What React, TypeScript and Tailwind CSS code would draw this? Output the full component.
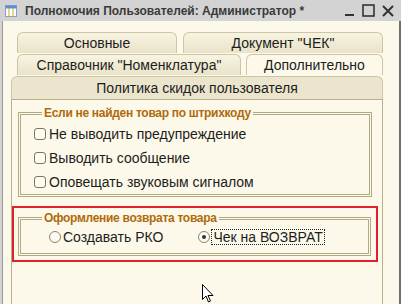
import React from 'react';

const font = { fontFamily: '"Liberation Sans", Arial, sans-serif' };

function Tab({ label, className = '' }: { label: string; className?: string }) {
  return (
    <div
      className={`h-[21px] flex items-center justify-center rounded-t-[6px] border border-b-0 border-[#cdc5a3] bg-gradient-to-b from-[#f8f4e2] to-[#e9e3c9] text-[14px] text-[#1d1d1d] ${className}`}
    >
      {label}
    </div>
  );
}

function CheckRow({ label }: { label: string }) {
  return (
    <div className="flex items-center h-[24px]">
      <div className="w-[12px] h-[12px] rounded-[3px] border border-[#7d775e] bg-[#fdfbf1]" />
      <span className="ml-[3px] text-[14px] text-[#1d1d1d]">{label}</span>
    </div>
  );
}

function Group({ title, children, className = '' }: { title: string; children: React.ReactNode; className?: string }) {
  return (
    <fieldset className={`border-[3px] border-double border-[#b2aa84] px-[13px] ${className}`}>
      <legend className="ml-[8px] px-[2px] text-[12px] font-bold text-[#b06a0c] tracking-[-0.3px]">{title}</legend>
      {children}
    </fieldset>
  );
}

export default function App() {
  return (
    <div className="w-[401px] h-[304px] overflow-hidden relative bg-[#d3d3d3]" style={font}>
      {/* title bar */}
      <div className="h-[21px] flex items-center px-[5px]">
        <svg width="12" height="12" viewBox="0 0 12 12" className="shrink-0">
          <rect x="0.5" y="0.5" width="11" height="11" fill="#fff" stroke="#8aa1c4" />
          <rect x="0.5" y="0.5" width="11" height="3" fill="#5b8fd6" />
          <line x1="4" y1="3" x2="4" y2="12" stroke="#c8a93a" />
          <line x1="8" y1="3" x2="8" y2="12" stroke="#c8a93a" />
        </svg>
        <span className="ml-[8px] text-[12px] font-bold text-[#3a3a3a]">Полномочия Пользователей: Администратор *</span>
        <div className="ml-auto flex items-center gap-[7px] pr-[2px] text-[#333]">
          <svg width="10" height="12" viewBox="0 0 10 12">
            <rect x="0" y="9" width="9" height="2" fill="#333" />
          </svg>
          <svg width="13" height="13" viewBox="0 0 13 13">
            <rect x="1" y="1" width="11" height="11" fill="none" stroke="#333" strokeWidth="1.6" />
          </svg>
          <svg width="12" height="12" viewBox="0 0 12 12">
            <path d="M1 1 L11 11 M11 1 L1 11" stroke="#333" strokeWidth="2" />
          </svg>
        </div>
      </div>

      {/* window body */}
      <div className="h-[283px] ml-[2px] mr-[2px] border-l border-[#9a9a9a] bg-[#fcf9ea] pl-[8px] pr-[16px] pt-[11px]">
        <div className="flex flex-col">
          <div className="flex gap-[6px] pl-[6px]">
            <Tab label="Основные" className="w-[160px]" />
            <Tab label={'Документ "ЧЕК"'} className="flex-1" />
          </div>
          <div className="flex gap-[5px] pl-[6px] mt-[1px]">
            <Tab label={'Справочник "Номенклатура"'} className="w-[224px]" />
            <Tab label="Дополнительно" className="flex-1 bg-none bg-[#fcf9ea]" />
          </div>
          <div className="h-[23px] mt-[1px] flex items-center justify-center rounded-t-[6px] border border-b-0 border-[#cdc5a3] bg-[#ebe5cd] text-[14px] text-[#1d1d1d]">
            Политика скидок пользователя
          </div>
          <div className="h-[220px] border border-[#b8b08c] bg-[#fcf9ea] pt-[4px] flex flex-col">
            <Group title="Если не найден товар по штрихкоду" className="ml-[6px] mr-[10px] h-[93px]">
              <div className="flex flex-col">
                <CheckRow label="Не выводить предупреждение" />
                <CheckRow label="Выводить сообщение" />
                <CheckRow label="Оповещать звуковым сигналом" />
              </div>
            </Group>
            <div className="mt-[9px] mr-[4px] border-2 border-[#e0202a] pt-[1px] pb-[4px] pl-[4px] pr-[5px]">
              <Group title="Оформление возврата товара" className="h-[47px]">
                <div className="flex items-center h-[24px] -mt-[2px] pl-[15px]">
                  <div className="w-[12px] h-[12px] rounded-full border border-[#8a8470] bg-[#fdfbf1]" />
                  <span className="ml-[2px] text-[14px] text-[#1d1d1d]">Создавать РКО</span>
                  <div className="ml-[35px] w-[12px] h-[12px] rounded-full border border-[#8a8470] bg-[#fdfbf1] flex items-center justify-center">
                    <div className="w-[4px] h-[4px] rounded-full bg-[#333]" />
                  </div>
                  <span className="ml-[1px] px-[1px] border border-dotted border-[#222] text-[14px] text-[#1d1d1d] leading-[14px]">Чек на ВОЗВРАТ</span>
                </div>
              </Group>
            </div>
          </div>
        </div>
      </div>
      <div className="absolute right-0 top-[21px] w-[2px] h-[283px] bg-[#707070]" />

      {/* mouse cursor */}
      <svg className="absolute left-[202px] top-[284px]" width="12" height="20" viewBox="0 0 12 20">
        <path d="M0.5 0.5 L0.5 15.5 L4 12 L6.5 18 L8.5 17 L6 11.5 L11 11.5 Z" fill="#fff" stroke="#000" strokeWidth="1" />
      </svg>
    </div>
  );
}
